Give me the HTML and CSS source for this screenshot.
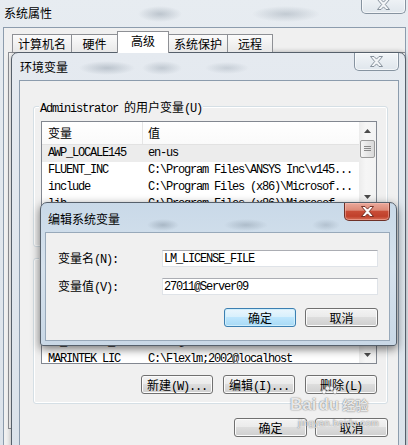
FILE: index.html
```html
<!DOCTYPE html>
<html lang="zh-CN">
<head>
    <meta charset="UTF-8">
    <meta name="viewport" content="width=device-width, initial-scale=1.0">
    <title>系统属性 - 环境变量</title>
    <link rel="stylesheet" href="styles.css">
</head>
<body>
<div class="desk">

    <!-- 系统属性 (behind) -->
    <div class="win sys">
        <div class="titlebar">
            <span class="title">系统属性</span>
            <span class="close"><svg width="13" height="11" viewBox="0 0 13 11"><path d="M0.5 0.5h3.5l2.5 2.6 2.5-2.6h3.5l-4.2 5 4.2 5h-3.5l-2.5-2.6-2.5 2.6h-3.5l4.2-5z"/></svg></span>
        </div>
        <div class="client">
            <div class="tabs">
                <span class="tab tab-name">计算机名</span>
                <span class="tab tab-hw">硬件</span>
                <span class="tab tab-adv active">高级</span>
                <span class="tab tab-name">系统保护</span>
                <span class="tab tab-remote">远程</span>
            </div>
            <div class="tabpanel"></div>
        </div>
    </div>

    <!-- 环境变量 -->
    <div class="win env">
        <div class="titlebar">
            <span class="title">环境变量</span>
            <span class="close"><svg width="13" height="11" viewBox="0 0 13 11"><path d="M0.5 0.5h3.5l2.5 2.6 2.5-2.6h3.5l-4.2 5 4.2 5h-3.5l-2.5-2.6-2.5 2.6h-3.5l4.2-5z"/></svg></span>
        </div>
        <div class="client">
            <div class="group group-user">
                <div class="group-label"><span class="k">Administrator </span>的用户变量<span class="k">(U)</span></div>
                <div class="list list-user">
                    <div class="list-main">
                        <div class="list-head">
                            <span class="cell name">变量</span>
                            <span class="cell value">值</span>
                        </div>
                        <div class="row selected"><span class="cell name">AWP_LOCALE145</span><span class="cell value">en-us</span></div>
                        <div class="row"><span class="cell name">FLUENT_INC</span><span class="cell value">C:\Program Files\ANSYS Inc\v145...</span></div>
                        <div class="row"><span class="cell name">include</span><span class="cell value">C:\Program Files (x86)\Microsof...</span></div>
                        <div class="row"><span class="cell name">lib</span><span class="cell value">C:\Program Files (x86)\Microsof...</span></div>
                    </div>
                    <div class="scrollbar">
                        <span class="sb-btn"><svg width="7" height="4" viewBox="0 0 7 4"><path d="M0 4L3.5 0L7 4z"/></svg></span>
                        <span class="sb-thumb"></span>
                        <span class="sb-track"></span>
                        <span class="sb-btn"><svg width="7" height="4" viewBox="0 0 7 4"><path d="M0 0L3.5 4L7 0z"/></svg></span>
                    </div>
                </div>
                <div class="btn-row">
                    <button class="btn">新建<span class="k">(N)...</span></button>
                    <button class="btn">编辑<span class="k">(E)...</span></button>
                    <button class="btn">删除<span class="k">(D)</span></button>
                </div>
            </div>

            <div class="group group-system">
                <div class="group-label">系统变量<span class="k">(S)</span></div>
                <div class="list list-system">
                    <div class="list-main">
                        <div class="list-head">
                            <span class="cell name">变量</span>
                            <span class="cell value">值</span>
                        </div>
                        <div class="row"><span class="cell name">FP_NO_HOST_C...</span><span class="cell value">NO</span></div>
                        <div class="row"><span class="cell name">INTEL_LICEN...</span><span class="cell value">C:\Program Files (x86)\Common ...</span></div>
                        <div class="row"><span class="cell name">LM_LICENSE_...</span><span class="cell value">27011@Server09</span></div>
                        <div class="row"><span class="cell name">MARINTEK_LIC</span><span class="cell value">C:\Flexlm;2002@localhost</span></div>
                    </div>
                    <div class="scrollbar">
                        <span class="sb-btn"><svg width="7" height="4" viewBox="0 0 7 4"><path d="M0 4L3.5 0L7 4z"/></svg></span>
                        <span class="sb-thumb"></span>
                        <span class="sb-track"></span>
                        <span class="sb-btn"><svg width="7" height="4" viewBox="0 0 7 4"><path d="M0 0L3.5 4L7 0z"/></svg></span>
                    </div>
                </div>
                <div class="btn-row">
                    <button class="btn">新建<span class="k">(W)...</span></button>
                    <button class="btn">编辑<span class="k">(I)...</span></button>
                    <button class="btn">删除<span class="k">(L)</span></button>
                </div>
            </div>

            <div class="btn-row dialog-btns">
                <button class="btn">确定</button>
                <button class="btn">取消</button>
            </div>
        </div>
    </div>

    <!-- 编辑系统变量 (front) -->
    <div class="win edit">
        <div class="titlebar">
            <span class="title">编辑系统变量</span>
            <span class="close red"><svg width="13" height="11" viewBox="0 0 13 11"><path d="M0.5 0.5h3.5l2.5 2.6 2.5-2.6h3.5l-4.2 5 4.2 5h-3.5l-2.5-2.6-2.5 2.6h-3.5l4.2-5z"/></svg></span>
        </div>
        <div class="client">
            <div class="field">
                <label for="varName">变量名<span class="k">(N):</span></label>
                <input id="varName" class="input" type="text" value="LM_LICENSE_FILE">
            </div>
            <div class="field">
                <label for="varValue">变量值<span class="k">(V):</span></label>
                <input id="varValue" class="input" type="text" value="27011@Server09">
            </div>
            <div class="btn-row edit-btns">
                <button class="btn default">确定</button>
                <button class="btn">取消</button>
            </div>
        </div>
    </div>

    <!-- watermark -->
    <div class="watermark">
        <div class="wm-logo">
            <span class="wm-bai">Bai</span>
            <span class="wm-du">
                <svg width="16" height="9" viewBox="0 0 16 9"><ellipse cx="3" cy="5.5" rx="2" ry="2.6"/><ellipse cx="6.5" cy="2.2" rx="2" ry="2.2"/><ellipse cx="10.5" cy="2.2" rx="2" ry="2.2"/><ellipse cx="14" cy="5.5" rx="2" ry="2.6"/></svg>
                <span>du</span>
            </span>
            <span class="wm-jy">经验</span>
        </div>
        <div class="wm-url">jingyan.baidu.com</div>
    </div>

</div>
</body>
</html>
```

FILE: styles.css
```css
:root {
    --face: #f0f0f0;
    --glass: #dde4eb;
    --frame-line: #56606b;
    --client-line: #8c9cad;
    --btn-line: #707070;
    --list-line: #828790;
}

* {
    box-sizing: border-box;
}

body {
    margin: 0;
    background: var(--glass);
    font-family: "Noto Sans CJK SC", "Liberation Sans", sans-serif;
    font-size: 12px;
    color: #000;
    overflow: hidden;
}

.desk {
    position: relative;
    width: 408px;
    height: 445px;
    overflow: hidden;
}

/* latin text in the old SimSun look: half width cells */
.k {
    font-family: "Liberation Mono", monospace;
    letter-spacing: -1.2px;
}

/* ---------- window chrome ---------- */

.win {
    position: absolute;
    display: flex;
    flex-direction: column;
    border: 1px solid var(--frame-line);
    border-radius: 7px 7px 3px 3px;
}

.titlebar {
    display: flex;
    align-items: flex-start;
    flex-shrink: 0;
}

.title {
    line-height: 17px;
    white-space: nowrap;
}

.close {
    margin-left: auto;
    width: 45px;
    height: 18px;
    display: flex;
    align-items: center;
    justify-content: center;
    border: 1px solid #8693a0;
    border-top: none;
    border-radius: 0 0 5px 5px;
    background: linear-gradient(#f2f5f8, #dfe6ec);
    box-shadow: inset 0 0 0 1px rgba(255, 255, 255, 0.6);
}

.close svg path {
    fill: #f4f6f8;
    stroke: #7a8692;
    stroke-width: 0.9;
}

.close.red {
    width: 46px;
    border-color: #6e3128;
    background: linear-gradient(#eaa99b 0%, #dd8a78 42%, #c84c36 50%, #c0402b 78%, #d66f57 100%);
    box-shadow: inset 0 0 0 1px rgba(255, 200, 190, 0.45);
}

.close.red svg path {
    fill: #fff;
    stroke: #6a2219;
}

.client {
    flex: 1;
    overflow: hidden;
    background: var(--face);
    border: 1px solid var(--client-line);
}

/* ---------- 系统属性 ---------- */

.sys {
    left: -5px;
    top: -5px;
    width: 420px;
    height: 460px;
    padding: 0 8px 8px 7px;
    background:
        radial-gradient(22px 8px at 164px 18px, rgba(110, 125, 140, 0.35), transparent),
        radial-gradient(34px 8px at 290px 18px, rgba(110, 125, 140, 0.3), transparent),
        linear-gradient(#e7ecf1, #dbe2ea);
}

.sys .titlebar {
    height: 31px;
}

.sys .title {
    padding: 8px 0 0 1px;
}

.sys .client {
    padding-top: 3px;
}

.tabs {
    display: flex;
    align-items: flex-end;
    padding-left: 8px;
    position: relative;
    z-index: 1;
}

.tab {
    height: 18px;
    display: flex;
    align-items: center;
    justify-content: center;
    margin-left: -1px;
    border: 1px solid #8e9095;
    border-bottom: none;
    background: linear-gradient(#fbfbfb, #e8e8e8);
    line-height: 16px;
}

.tab:first-child {
    margin-left: 0;
}

.tab-name { width: 60px; }
.tab-hw { width: 47px; }
.tab-remote { width: 46px; }

.tab.active {
    width: 52px;
    height: 22px;
    margin-bottom: -1px;
    padding-bottom: 4px;
    background: #fff;
}

.tabpanel {
    margin-left: 4px;
    width: 400px;
    height: 377px;
    background: #fafafa;
    border: 1px solid #8e9095;
}

/* ---------- 环境变量 ---------- */

.env {
    left: 11px;
    top: 52px;
    width: 395px;
    height: 420px;
    padding: 0 6px 0 7px;
    background:
        radial-gradient(28px 7px at 95px 15px, rgba(110, 125, 140, 0.35), transparent),
        radial-gradient(20px 7px at 150px 15px, rgba(110, 125, 140, 0.3), transparent),
        radial-gradient(22px 6px at 215px 15px, rgba(110, 125, 140, 0.25), transparent),
        linear-gradient(#e5eaf0, #dae2ea);
    box-shadow: 0 0 5px rgba(0, 0, 0, 0.3);
}

.env .titlebar {
    height: 27px;
}

.env .title {
    padding: 5px 0 0 1px;
}

.group {
    margin: 11px 0 0 13px;
    width: 355px;
    padding: 0 10px 9px 7px;
    border: 1px solid #d5dfe5;
    border-radius: 3px;
    box-shadow: inset 0 0 0 1px #fff;
}

.group-user {
    margin-top: 25px;
}

.group-label {
    width: fit-content;
    height: 17px;
    margin: -9px 0 0 -2px;
    padding: 0 1px;
    line-height: 17px;
    background: var(--face);
    white-space: nowrap;
}

.list {
    display: flex;
    margin-top: 6px;
    height: 85px;
    border: 1px solid var(--list-line);
    background: #fff;
}

.list-system {
    margin-top: 9px;
    height: 88px;
}

.list-main {
    flex: 1;
    overflow: hidden;
}

.list-head {
    display: flex;
    height: 23px;
    border-bottom: 1px solid #e2e2e2;
    background: linear-gradient(#fff, #fafafa);
    line-height: 22px;
}

.list-head .name {
    border-right: 1px solid #e5e5e5;
}

.row {
    display: flex;
    height: 17px;
    line-height: 17px;
    font-family: "Liberation Mono", monospace;
    letter-spacing: -1.2px;
}

.row.selected {
    background: #ececec;
}

.cell {
    white-space: nowrap;
    overflow: hidden;
}

.cell.name {
    flex: 0 0 101px;
    padding-left: 6px;
}

.cell.value {
    flex: 1;
    padding-left: 5px;
}

.scrollbar {
    flex: 0 0 17px;
    display: flex;
    flex-direction: column;
    background: linear-gradient(to right, #ececec, #f6f6f6 40%, #f3f3f3);
}

.sb-btn {
    height: 17px;
    display: flex;
    align-items: center;
    justify-content: center;
}

.sb-btn svg path {
    fill: #4a4a4a;
}

.sb-thumb {
    position: relative;
    height: 18px;
    margin: 1px 1px 0 1px;
    border: 1px solid #9b9b9b;
    border-radius: 2px;
    background: linear-gradient(to right, #f6f6f6, #e6e6e6 50%, #d9d9d9);
}

.sb-thumb::after {
    content: "";
    position: absolute;
    left: 3px;
    right: 3px;
    top: 5px;
    height: 6px;
    background: repeating-linear-gradient(#8a8a8a 0 1px, transparent 1px 2px);
}

.sb-track {
    flex: 1;
}

.btn-row {
    display: flex;
    justify-content: flex-end;
    gap: 10px;
    margin-top: 12px;
}

.group-system .btn-row {
    margin-top: 11px;
}

.btn {
    width: 72px;
    height: 19px;
    padding: 0;
    border: 1px solid var(--btn-line);
    border-radius: 3px;
    background: linear-gradient(#f3f3f3 0%, #ebebeb 45%, #dddddd 50%, #cfcfcf 100%);
    box-shadow: inset 0 0 0 1px #fbfbfb;
    font-family: "Noto Sans CJK SC", sans-serif;
    font-size: 12px;
    line-height: 17px;
    color: #000;
    white-space: nowrap;
}

.dialog-btns {
    margin: 14px 10px 0 0;
    gap: 8px;
}

.dialog-btns .btn {
    width: 73px;
}

/* ---------- 编辑系统变量 ---------- */

.edit {
    left: 40px;
    top: 202px;
    width: 357px;
    height: 144px;
    padding: 0 6px 4px 4px;
    background:
        radial-gradient(16px 6px at 122px 22px, rgba(100, 115, 130, 0.35), transparent),
        radial-gradient(22px 6px at 205px 22px, rgba(100, 115, 130, 0.3), transparent),
        radial-gradient(14px 6px at 285px 22px, rgba(100, 115, 130, 0.25), transparent),
        linear-gradient(#c9d9e8, #d6e2ed 45%, #c9d8e6);
    box-shadow: 0 3px 10px rgba(0, 0, 0, 0.55);
    z-index: 2;
}

.edit .titlebar {
    height: 29px;
}

.edit .title {
    padding: 7px 0 0 3px;
}

.edit .client {
    padding: 17px 11px 0 12px;
    border-color: #98a9ba;
}

.field {
    display: flex;
    align-items: center;
    height: 17px;
}

.field + .field {
    margin-top: 11px;
}

.field label {
    width: 104px;
    line-height: 17px;
    white-space: nowrap;
}

.input {
    width: 216px;
    height: 17px;
    margin: 0;
    padding: 0 0 0 1px;
    border: 1px solid #dfe3e8;
    border-top-color: #abadb3;
    background: #fff;
    font-family: "Liberation Mono", monospace;
    font-size: 12px;
    letter-spacing: -1.2px;
    color: #000;
    outline: none;
}

.edit-btns {
    margin-top: 13px;
    gap: 9px;
}

.edit-btns .btn + .btn {
    width: 73px;
}

.btn.default {
    border-color: #3c7fb1;
    background: linear-gradient(#eaf6fd 0%, #d9f0fc 45%, #bee6fd 50%, #a7d9f5 100%);
    box-shadow: inset 0 0 0 1px #cfeefc;
}

/* ---------- watermark ---------- */

.watermark {
    position: absolute;
    left: 290px;
    top: 386px;
    z-index: 3;
    color: rgba(255, 255, 255, 0.85);
    text-shadow: 0 0 1px rgba(60, 60, 60, 0.75), 0 0 2px rgba(120, 120, 120, 0.45);
    pointer-events: none;
}

.wm-logo {
    display: flex;
    align-items: flex-end;
    font-family: "Liberation Sans", sans-serif;
    font-weight: bold;
    font-size: 17px;
    line-height: 17px;
}

.wm-du {
    display: flex;
    flex-direction: column;
    align-items: center;
    margin-left: 2px;
}

.wm-du svg {
    fill: rgba(255, 255, 255, 0.85);
    stroke: rgba(90, 90, 90, 0.6);
    stroke-width: 0.6;
    margin-bottom: 1px;
}

.wm-jy {
    margin-left: 3px;
    font-family: "Noto Sans CJK SC", sans-serif;
    font-size: 13px;
    font-weight: bold;
    line-height: 16px;
}

.wm-url {
    margin: 5px 0 0 8px;
    font-family: "Liberation Sans", sans-serif;
    font-size: 9px;
    letter-spacing: 0.5px;
}
```
